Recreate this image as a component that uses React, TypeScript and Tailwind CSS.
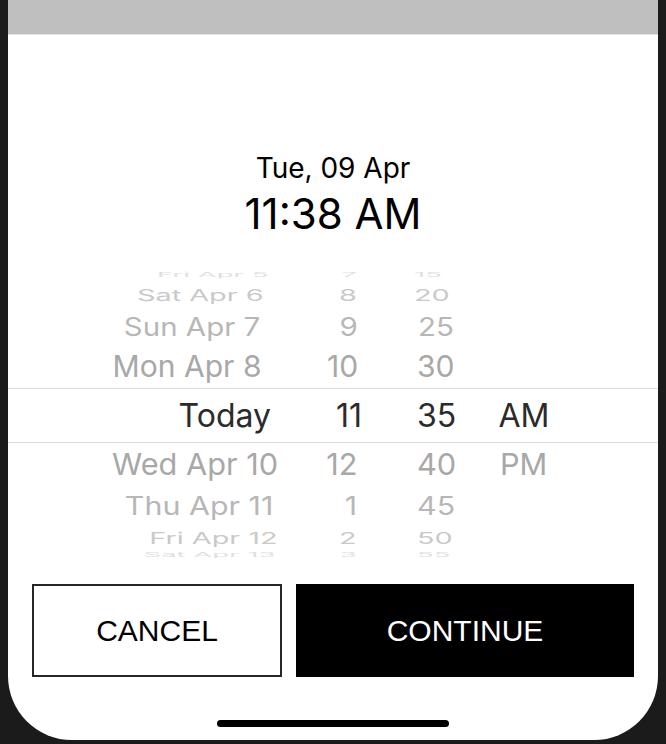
import React from "react";

type Row = {
  h: number;
  date: string;
  dr: number;
  hour: string;
  hr: number;
  min: string;
  ml: number;
  ap?: string;
  sx: number;
  sy: number;
  c: string;
  sel?: boolean;
};

const rows: Row[] = [
  { h: 14, date: "Fri Apr 5", dr: 268, hour: "7", hr: 357, min: "15", ml: 414, sx: 0.86, sy: 0.2, c: "#e0e0e0" },
  { h: 26, date: "Sat Apr 6", dr: 264, hour: "8", hr: 357, min: "20", ml: 414, sx: 0.9, sy: 0.5, c: "#c9c9c9" },
  { h: 38, date: "Sun Apr 7", dr: 260, hour: "9", hr: 358, min: "25", ml: 418, sx: 0.92, sy: 0.8, c: "#b7b7b7" },
  { h: 42, date: "Mon Apr 8", dr: 262, hour: "10", hr: 358, min: "30", ml: 417, sx: 0.94, sy: 0.93, c: "#a8a8a8" },
  { h: 55, date: "Today", dr: 271, hour: "11", hr: 362, min: "35", ml: 417, ap: "AM", sx: 1, sy: 1, c: "#2b2b2b", sel: true },
  { h: 44, date: "Wed Apr 10", dr: 278, hour: "12", hr: 358, min: "40", ml: 417, ap: "PM", sx: 0.96, sy: 0.93, c: "#a8a8a8" },
  { h: 38, date: "Thu Apr 11", dr: 273, hour: "1", hr: 357, min: "45", ml: 417, sx: 0.95, sy: 0.8, c: "#b7b7b7" },
  { h: 25, date: "Fri Apr 12", dr: 277, hour: "2", hr: 357, min: "50", ml: 417, sx: 0.9, sy: 0.5, c: "#c9c9c9" },
  { h: 10, date: "Sat Apr 13", dr: 275, hour: "3", hr: 357, min: "55", ml: 417, sx: 0.86, sy: 0.2, c: "#e0e0e0" },
];

function PickerRow({ r }: { r: Row }) {
  const scale = `scale(${r.sx}, ${r.sy})`;
  return (
    <div
      className={
        "flex shrink-0 items-center text-[32px] leading-none " +
        (r.sel ? "border-y border-[#dcdcdc]" : "")
      }
      style={{ height: r.h, color: r.c }}
    >
      <div className="w-[267px] shrink-0 text-right">
        <span
          className="inline-block origin-right whitespace-nowrap"
          style={{ transform: `translateX(${r.dr - 275}px) ${scale}` }}
        >
          {r.date}
        </span>
      </div>
      <div className="w-[87px] shrink-0 text-right">
        <span
          className="inline-block origin-right"
          style={{ transform: `translateX(${r.hr - 362}px) ${scale}` }}
        >
          {r.hour}
        </span>
      </div>
      <div className="w-[100px] shrink-0 pl-[55px]">
        <span
          className="inline-block origin-left"
          style={{ transform: `translateX(${r.ml - 417}px) ${scale}` }}
        >
          {r.min}
        </span>
      </div>
      <div className="w-[124px] shrink-0 text-center">
        <span className="inline-block" style={{ transform: scale }}>
          {r.ap ?? ""}
        </span>
      </div>
    </div>
  );
}

export default function App() {
  return (
    <div
      className="flex h-[744px] w-[666px] bg-[#1b1b1b] px-[8px] pb-[4px]"
      style={{ fontFamily: '"Liberation Sans", Arial, sans-serif' }}
    >
      <div className="flex flex-1 flex-col overflow-hidden rounded-b-[64px] bg-white">
        <div className="h-[34px] shrink-0 bg-[#bfbfbf]" />
        <div className="h-px shrink-0 bg-[#e4e4e4]" />

        <div style={{ fontFamily: 'Inter, "Liberation Sans", sans-serif' }}>
          <div className="mt-[119px] flex h-[28px] items-center justify-center text-[28px] leading-none text-black">
            Tue, 09 Apr
          </div>
          <div className="mt-[12px] flex h-[40px] items-center justify-center text-[42px] leading-none text-black">
            11:38 AM
          </div>

          <div className="mt-[34px] flex h-[290px] shrink-0 flex-col overflow-hidden">
            {rows.map((r, i) => (
              <PickerRow key={i} r={r} />
            ))}
          </div>
        </div>

        <div className="mt-[26px] flex gap-[14px] px-[24px]">
          <button className="flex h-[93px] w-[250px] items-center justify-center border-2 border-[#262626] bg-white text-[30px] leading-none text-black">
            CANCEL
          </button>
          <button className="flex h-[93px] flex-1 items-center justify-center bg-black text-[30px] leading-none text-white">
            CONTINUE
          </button>
        </div>

        <div className="flex flex-1 items-start justify-center pt-[43px]">
          <div className="h-[7px] w-[232px] rounded-full bg-black" />
        </div>
      </div>
    </div>
  );
}
